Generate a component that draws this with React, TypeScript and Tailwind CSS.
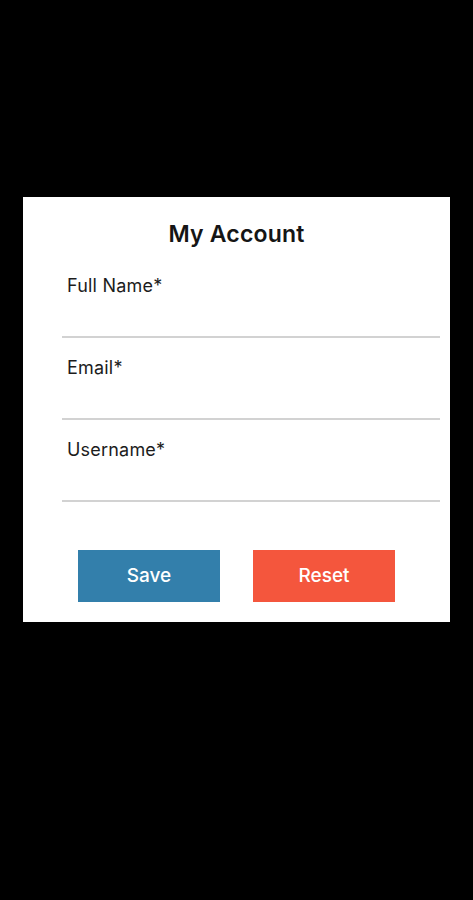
import React from 'react';

const fields = ['Full Name*', 'Email*', 'Username*'];

export default function App() {
  return (
    <div
      className="min-h-[900px] w-full bg-black pt-[197px] pl-[23px]"
      style={{ fontFamily: 'Inter, "Open Sans", sans-serif' }}
    >
      <div className="flex h-[425px] w-[427px] flex-col bg-white">
        {/* Title */}
        <h1 className="pt-[23px] text-center text-[23px] leading-[28px] font-semibold tracking-[0.2px] text-[#151515]">
          My Account
        </h1>

        {/* Fields */}
        <div className="mt-[8px] ml-[39px] mr-[10px] flex flex-col">
          {fields.map((label) => (
            <div key={label} className="h-[82px] border-b-2 border-[#d2d2d2]">
              <div className="pl-[5px] pt-[18px] text-[18px] leading-[24px] tracking-[0.2px] text-[#1c1c1c]">
                {label}
              </div>
            </div>
          ))}
        </div>

        {/* Buttons */}
        <div className="mt-[48px] flex justify-center gap-[33px]">
          <button className="flex h-[52px] w-[142px] items-center justify-center bg-[#337fab] text-[19px] font-medium text-white">
            Save
          </button>
          <button className="flex h-[52px] w-[142px] items-center justify-center bg-[#f4563d] text-[19px] font-medium text-white">
            Reset
          </button>
        </div>
      </div>
    </div>
  );
}
